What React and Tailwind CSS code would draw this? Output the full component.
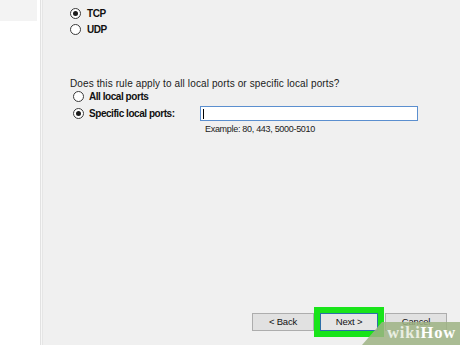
import React from "react";

function Radio({ checked }) {
  return (
    <span className="flex h-[11px] w-[11px] shrink-0 items-center justify-center rounded-full border border-[#3a3a3a] bg-white">
      {checked && <span className="h-[5px] w-[5px] rounded-full bg-[#1b1b1b]" />}
    </span>
  );
}

function Option({ checked, label, gap = "gap-[5px]" }) {
  return (
    <label className={`flex h-[14px] items-center ${gap}`}>
      <Radio checked={checked} />
      <span className="text-[10px] font-bold tracking-[-0.45px] text-[#111]">{label}</span>
    </label>
  );
}

function WinButton({ children, focused }) {
  return (
    <button
      className={
        focused
          ? "relative z-10 flex h-[18px] w-[58px] items-center justify-center border border-[#2d6ea8] bg-[#e5e5e5] text-[9.5px] tracking-[-0.2px] text-[#111] outline-[6px] outline-[#19e41a] outline-solid"
          : "flex h-[18px] w-[62px] items-center justify-center border border-[#adadad] bg-[#e1e1e1] text-[9.5px] tracking-[-0.2px] text-[#111]"
      }
    >
      {children}
    </button>
  );
}

export default function App() {
  return (
    <div
      className="relative flex h-[345px] w-[460px] overflow-hidden bg-[#f0f0f0]"
      style={{ fontFamily: '"Liberation Sans", Arial, sans-serif' }}
    >
      {/* left step list */}
      <div className="flex w-[37px] flex-col bg-white">
        <div className="h-[21px] bg-[#f3f3f3]" />
      </div>
      <div className="w-[3px] bg-white" />
      <div className="w-[1px] bg-[#e2e2e2]" />
      <div className="w-[1px] bg-[#f7f7f7]" />
      <div className="w-[1px] bg-[#e6e6e6]" />

      {/* wizard page */}
      <main className="flex flex-1 flex-col pl-[27px] pb-[14px] pt-[6px]">
        <div className="flex flex-col gap-[2px]">
          <Option checked label="TCP" gap="gap-[6px]" />
          <Option label="UDP" gap="gap-[6px]" />
        </div>

        <p className="mt-[42px] h-[12px] text-[10px] leading-[12px] tracking-[0.12px] text-[#1a1a1a]">
          Does this rule apply to all local ports or specific local ports?
        </p>

        <div className="mt-[-1px] flex flex-col pl-[3px]">
          <Option label="All local ports" />
          <div className="mt-[3px] flex h-[15px] items-center">
            <div className="w-[127px]">
              <Option checked label="Specific local ports:" />
            </div>
            <div className="flex h-[15px] w-[218px] items-center border border-[#5b8fcf] bg-white pl-[2px]">
              <span className="h-[10px] w-[1px] bg-black" />
            </div>
          </div>
          <p className="mt-[2px] pl-[132px] text-[9px] leading-[12px] tracking-[-0.3px] text-[#1a1a1a]">
            Example: 80, 443, 5000-5010
          </p>
        </div>

        <div className="mt-auto flex items-center pl-[182px]">
          <WinButton>&lt; Back</WinButton>
          <div className="ml-[6px]">
            <WinButton focused>Next &gt;</WinButton>
          </div>
          <div className="ml-[7px]">
            <WinButton>Cancel</WinButton>
          </div>
        </div>
      </main>

      {/* wikiHow watermark */}
      <div className="absolute bottom-0 right-0 z-20 flex h-[23px] w-[98px] items-center justify-end bg-[#9db384]/85 pr-[4px] [clip-path:polygon(20px_0,100%_0,100%_100%,0_100%)]">
        <span
          className="text-[16.5px] font-bold leading-none tracking-[0.8px]"
          style={{ fontFamily: '"Liberation Serif", "Times New Roman", serif' }}
        >
          <span className="text-[#e9eee2]">wiki</span>
          <span className="text-white">How</span>
        </span>
      </div>
    </div>
  );
}
